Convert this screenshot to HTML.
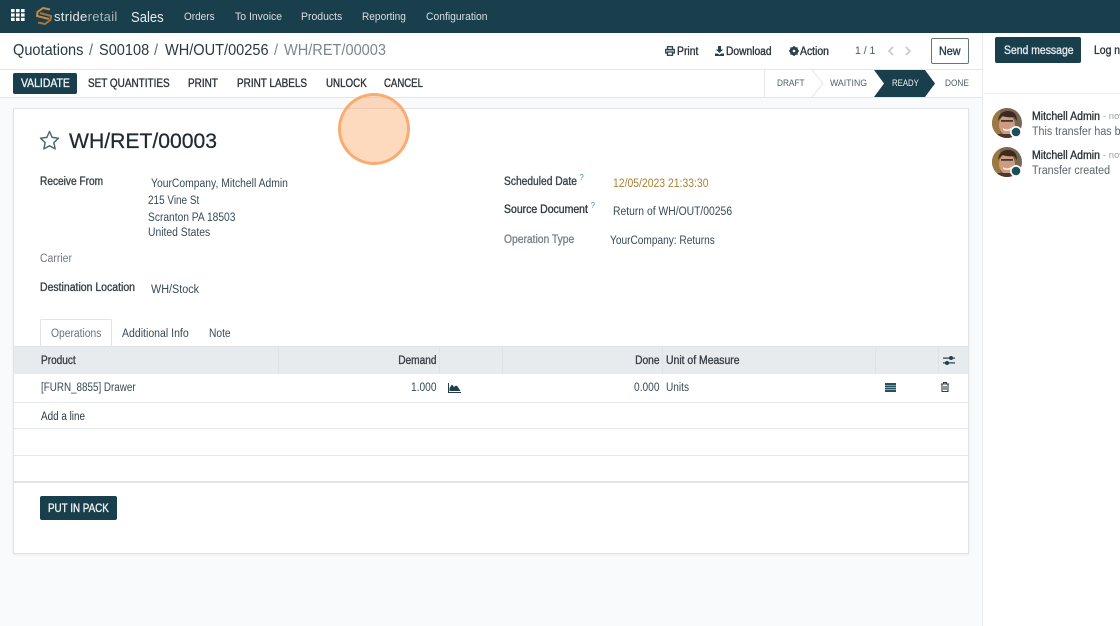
<!DOCTYPE html>
<html><head><meta charset="utf-8"><style>
html,body{margin:0;padding:0;width:1120px;height:626px;overflow:hidden;background:#fff;font-family:"Liberation Sans",sans-serif;-webkit-font-smoothing:antialiased}
.a{position:absolute}
.t{position:absolute;white-space:nowrap;font-size:12px;line-height:16px;color:#374b55;transform-origin:0 50%;transform:scaleX(calc(var(--s,1)*var(--k,1)))}
.b{color:#3a4248;font-size:11.5px;-webkit-text-stroke:.35px currentColor;--k:1.03}
.n{font-size:11.5px}
.nav{color:#d5dfe2;font-size:11px;top:9px;--s:.94}
.bc{font-size:16px;line-height:22px;top:40px;color:#2a3a42;--s:.91}
.sb{font-size:11.500px;-webkit-text-stroke:.35px currentColor;--k:1.03;color:#2c343a;top:76px}
.hd{font-size:11.500px;-webkit-text-stroke:.35px currentColor;--k:1.03;top:353px;color:#3a4248}
.st{font-size:9.5px;top:76px;color:#4f6068}
.r{text-align:right;transform-origin:100% 50%}
.hl{position:absolute;height:1px;left:14px;width:954px;background:#e5e8ea}
.vl{position:absolute;width:1px;top:347px;height:27px;background:#dfe3e6}
sup{color:#2c8fa8;font-size:8px;line-height:0;-webkit-text-stroke:0}
</style></head><body>
<div class="a" style="left:0;top:0;width:1120px;height:33px;background:#1a3f4c"></div>
<svg class="a" style="left:11px;top:9px" width="14" height="12" viewBox="0 0 14 12" fill="#fff"><rect x="0" y="0" width="3.6" height="3.2"/><rect x="5" y="0" width="3.6" height="3.2"/><rect x="10" y="0" width="3.6" height="3.2"/><rect x="0" y="4.4" width="3.6" height="3.2"/><rect x="5" y="4.4" width="3.6" height="3.2"/><rect x="10" y="4.4" width="3.6" height="3.2"/><rect x="0" y="8.8" width="3.6" height="3.2"/><rect x="5" y="8.8" width="3.6" height="3.2"/><rect x="10" y="8.8" width="3.6" height="3.2"/></svg>
<svg class="a" style="left:36px;top:7px" width="16" height="18" viewBox="0 0 16 18" fill="none"><path d="M14 2.5 7 1 1.5 5 1 9l12 3" stroke="#c98a3e" stroke-width="2"/><path d="M2 15.500 9 17l5.500-4 .5-4L4 6" stroke="#a8743a" stroke-width="2"/></svg>
<div class="t" style="left:54px;top:8px;font-size:13px;line-height:17px;color:#e4e9eb;letter-spacing:.3px">stride<span style="color:#a9b8bd">retail</span></div>
<div class="t" style="left:131px;top:8px;font-size:15px;line-height:19px;color:#e6ecee;--s:.87">Sales</div>
<div class="t nav" style="left:184px;--s:.91">Orders</div>
<div class="t nav" style="left:234.500px;--s:.95">To Invoice</div>
<div class="t nav" style="left:301px;--s:.95">Products</div>
<div class="t nav" style="left:362px;--s:.92">Reporting</div>
<div class="t nav" style="left:425.500px">Configuration</div>

<div class="a" style="left:0;top:33px;width:982px;height:36px;background:#fff;border-bottom:1px solid #e3e6e8"></div>
<div class="t bc" style="left:13px">Quotations</div>
<div class="t bc" style="left:89px;color:#5f6b72">/</div>
<div class="t bc" style="left:99px">S00108</div>
<div class="t bc" style="left:154px;color:#5f6b72">/</div>
<div class="t bc" style="left:164.500px">WH/OUT/00256</div>
<div class="t bc" style="left:274px;color:#7b868c">/</div>
<div class="t bc" style="left:284px;color:#7b868c">WH/RET/00003</div>

<svg class="a" style="left:665px;top:46px" width="10" height="10" viewBox="0 0 10 10" fill="none" stroke="#29414c" stroke-width="1.300"><rect x="2.500" y=".7" width="5" height="3"/><rect x=".7" y="3.500" width="8.600" height="3.500"/><rect x="2.500" y="6" width="5" height="3.300" fill="#fff"/></svg>
<div class="t sb" style="left:677px;top:44px;--s:.88">Print</div>
<svg class="a" style="left:715px;top:46px" width="9" height="10" viewBox="0 0 9 10" fill="#29414c"><path d="M3 0h3v3.500h2.300L4.500 7 .7 3.500H3zM0 7.500h2.500l2 1.200 2-1.200H9V10H0z"/></svg>
<div class="t sb" style="left:726px;top:44px;--s:.865">Download</div>
<svg class="a" style="left:789px;top:46px" width="10" height="10" viewBox="0 0 10 10"><circle cx="5" cy="5" r="3.300" fill="none" stroke="#29414c" stroke-width="2"/><path d="M5 0v10M0 5h10M1.500 1.500l7 7M8.500 1.500l-7 7" stroke="#29414c" stroke-width="1.500"/><circle cx="5" cy="5" r="1.300" fill="#fff"/></svg>
<div class="t sb" style="left:800px;top:44px;--s:.88">Action</div>
<div class="t" style="left:855px;top:43px;font-size:11px;color:#4a5860;--s:.95">1 / 1</div>
<svg class="a" style="left:887px;top:46px" width="30" height="10" viewBox="0 0 30 10" fill="none" stroke="#c3c9cd" stroke-width="1.600"><path d="M6 1 2 5l4 4M19 1l4 4-4 4"/></svg>
<div class="a" style="left:931px;top:38px;width:36px;height:24px;border:1px solid #5f7780;border-radius:2px;background:#fff"></div>
<div class="t sb" style="left:939px;top:44px;color:#253f4a;--s:.91">New</div>

<div class="a" style="left:0;top:70px;width:982px;height:27px;background:#fff;border-bottom:1px solid #e3e6e8"></div>
<div class="a" style="left:13px;top:73px;width:64px;height:21px;background:#1a3f4c;border-radius:2px"></div>
<div class="t sb" style="left:21px;color:#eef2f3;--s:.88">VALIDATE</div>
<div class="t sb" style="left:88px;--s:.84">SET QUANTITIES</div>
<div class="t sb" style="left:188px;--s:.84">PRINT</div>
<div class="t sb" style="left:237px;--s:.84">PRINT LABELS</div>
<div class="t sb" style="left:325.500px;--s:.825">UNLOCK</div>
<div class="t sb" style="left:384px;--s:.81">CANCEL</div>

<svg class="a" style="left:764px;top:70px" width="218" height="27" viewBox="0 0 218 27"><path d="M.5 0v27" stroke="#e5e8ea"/><path d="M48 0l11 13.500L48 27" fill="none" stroke="#e5e8ea"/><path d="M110 0h51l10 13.500L161 27h-51l10-13.500z" fill="#1a3f4c"/></svg>
<div class="t st" style="left:777px;--s:.87">DRAFT</div>
<div class="t st" style="left:830px;--s:.92">WAITING</div>
<div class="t st" style="left:892px;color:#eef2f3;--s:.82">READY</div>
<div class="t st" style="left:945px;--s:.87">DONE</div>

<div class="a" style="left:0;top:98px;width:982px;height:528px;background:#f9fafb"></div>
<div class="a" style="left:13px;top:108px;width:954px;height:444px;background:#fff;border:1px solid #e1e4e6;box-shadow:0 1px 2px rgba(0,0,0,.06)"></div>

<svg class="a" style="left:39px;top:130px" width="21" height="20" viewBox="0 0 21 20"><path d="M10.500 1.500l2.700 5.900 6.300.8-4.600 4.400 1.200 6.300-5.600-3.100-5.600 3.100 1.200-6.300L1.500 8.200l6.300-.8z" fill="none" stroke="#4d6a75" stroke-width="1.500" stroke-linejoin="round"/></svg>
<div class="t" style="left:69px;top:127px;font-size:21.500px;line-height:28px;color:#212a30;-webkit-text-stroke:.25px #212a30;--s:.983">WH/RET/00003</div>

<div class="t b" style="left:40px;top:174px;--s:.855">Receive From</div>
<div class="t n" style="left:151px;top:176px;--s:.9">YourCompany, Mitchell Admin</div>
<div class="t n" style="left:148px;top:193px;--s:.865">215 Vine St</div>
<div class="t n" style="left:148px;top:210px;--s:.89">Scranton PA 18503</div>
<div class="t n" style="left:148px;top:225px;--s:.9">United States</div>
<div class="t n" style="left:40px;top:251px;color:#6f7a80;--s:.91">Carrier</div>
<div class="t b" style="left:40px;top:280px;--s:.885">Destination Location</div>
<div class="t n" style="left:151px;top:281.500px;--s:.94">WH/Stock</div>

<div class="t b" style="left:504px;top:174px;--s:.865">Scheduled Date <sup>?</sup></div>
<div class="t n" style="left:613px;top:176px;color:#a9802f;--s:.905">12/05/2023 21:33:30</div>
<div class="t b" style="left:504px;top:202px;color:#2f3a40;--s:.885">Source Document <sup>?</sup></div>
<div class="t n" style="left:613px;top:204px;--s:.9">Return of WH/OUT/00256</div>
<div class="t b" style="left:504px;top:232px;color:#7a8489;--s:.87">Operation Type</div>
<div class="t n" style="left:610px;top:233px;--s:.88">YourCompany: Returns</div>

<div class="a" style="left:40px;top:319px;width:70px;height:28px;border:1px solid #e1e4e6;border-bottom:none;border-radius:2px 2px 0 0;background:#fff"></div>
<div class="t" style="left:50.500px;top:325.500px;font-size:11.500px;color:#6a7379;--s:.895">Operations</div>
<div class="t" style="left:121.500px;top:325.500px;font-size:11.500px;--s:.915">Additional Info</div>
<div class="t" style="left:208.500px;top:325.500px;font-size:11.500px;--s:.89">Note</div>

<div class="a" style="left:14px;top:346px;width:954px;height:28px;background:#e8ebee;border-top:1px solid #dfe3e6;box-sizing:border-box"></div>
<div class="vl" style="left:278px"></div><div class="vl" style="left:439px"></div><div class="vl" style="left:502px"></div><div class="vl" style="left:662px"></div><div class="vl" style="left:875px"></div><div class="vl" style="left:938px"></div>
<div class="t hd" style="left:41px;--s:.85">Product</div>
<div class="t hd r" style="left:340px;width:96.500px;--s:.855">Demand</div>
<div class="t hd r" style="left:560px;width:99.500px;--s:.86">Done</div>
<div class="t hd" style="left:666px;--s:.88">Unit of Measure</div>
<svg class="a" style="left:943px;top:355px" width="12" height="11" viewBox="0 0 12 11" fill="#253f4a"><rect y="2.500" width="12" height="1.200"/><rect y="7.300" width="12" height="1.200"/><circle cx="8" cy="3" r="2"/><circle cx="4" cy="8" r="2"/></svg>

<div class="t" style="left:41px;top:379.500px;font-size:11.500px;--s:.856">[FURN_8855] Drawer</div>
<div class="t r" style="left:340px;width:96.500px;top:379.500px;font-size:11.500px;--s:.885">1.000</div>
<svg class="a" style="left:448px;top:383px" width="13" height="10" viewBox="0 0 13 10" fill="#1f3e4a"><path d="M0 0h1v9h12v1H0z"/><path d="M1.500 8V5L4 1.500 6 4l2-1.500 1.500 1L12.500 8z"/></svg>
<div class="t r" style="left:560px;width:99.500px;top:379.500px;font-size:11.500px;--s:.885">0.000</div>
<div class="t" style="left:666px;top:379.500px;font-size:11.500px;--s:.88">Units</div>
<svg class="a" style="left:885px;top:383px" width="11" height="9" viewBox="0 0 11 9" fill="#29505e"><rect width="11" height="2"/><rect y="2.400" width="11" height="1.800"/><rect y="4.700" width="11" height="1.800"/><rect y="7" width="11" height="2"/></svg>
<svg class="a" style="left:941px;top:382px" width="8" height="10" viewBox="0 0 8 10" fill="none" stroke="#333d43" stroke-width="1.100"><path d="M0 2h8M2.500 2V.6h3V2M1 2.500v7h6v-7M3 4v4M5 4v4"/></svg>

<div class="hl" style="top:402px"></div>
<div class="t" style="left:41px;top:408.500px;font-size:11.500px;color:#2a3a42;--s:.86">Add a line</div>
<div class="hl" style="top:428px"></div>
<div class="hl" style="top:455px"></div>
<div class="hl" style="top:481px;height:2px;background:#e0e3e5"></div>

<div class="a" style="left:40px;top:496px;width:77px;height:24px;background:#1a3f4c;border-radius:2px"></div>
<div class="t sb" style="left:48px;top:501px;color:#eef2f3;--s:.83">PUT IN PACK</div>

<div class="a" style="left:982px;top:33px;width:1px;height:593px;background:#e8eaec"></div>
<div class="a" style="left:983px;top:33px;width:137px;height:593px;overflow:hidden">
<div class="a" style="left:12px;top:4px;width:86px;height:26px;background:#1a3f4c;border-radius:2px"></div>
<div class="t sb" style="left:21px;top:10px;color:#e4eaec;--s:.88">Send message</div>
<div class="t sb" style="left:111px;top:10px;--s:.88">Log note</div>
<div class="a" style="left:0;top:60px;width:137px;height:1px;background:#f0f1f2"></div>

<svg class="a" style="left:9px;top:75px" width="30" height="30" viewBox="0 0 30 30"><defs><clipPath id="c"><circle cx="15" cy="15" r="15"/></clipPath></defs><g clip-path="url(#c)"><rect width="30" height="30" fill="#7a6650"/><rect x="0" y="0" width="8" height="30" fill="#9a7a40"/><ellipse cx="15" cy="17" rx="8" ry="10" fill="#cf9c7e"/><path d="M6 13q1-10 10-10t9 10l-3-4q-6 1-12-1z" fill="#3d2a1f"/><rect x="9" y="12" width="12" height="1.800" fill="#3a3a3a"/><path d="M11 20q4 3 8 0v2q-4 2-8 0z" fill="#f4eeea"/><rect y="26" width="30" height="4" fill="#4e342a"/></g><circle cx="24" cy="24" r="6" fill="#fff"/><circle cx="24" cy="24" r="4.300" fill="#1a4f5c"/></svg>
<svg class="a" style="left:9px;top:114px" width="30" height="30" viewBox="0 0 30 30"><g clip-path="url(#c)"><rect width="30" height="30" fill="#7a6650"/><rect x="0" y="0" width="8" height="30" fill="#9a7a40"/><ellipse cx="15" cy="17" rx="8" ry="10" fill="#cf9c7e"/><path d="M6 13q1-10 10-10t9 10l-3-4q-6 1-12-1z" fill="#3d2a1f"/><rect x="9" y="12" width="12" height="1.800" fill="#3a3a3a"/><path d="M11 20q4 3 8 0v2q-4 2-8 0z" fill="#f4eeea"/><rect y="26" width="30" height="4" fill="#4e342a"/></g><circle cx="24" cy="24" r="6" fill="#fff"/><circle cx="24" cy="24" r="4.300" fill="#1a4f5c"/></svg>

<div class="t b" style="left:48.500px;top:76px;color:#2b3338;--s:.89">Mitchell Admin</div>
<div class="t" style="left:120px;top:76px;font-size:9.500px;color:#9aa3a8">- now</div>
<div class="t n" style="left:48.500px;top:91px;color:#5a666c;--s:.93">This transfer has been created</div>
<div class="t b" style="left:48.500px;top:115px;color:#2b3338;--s:.89">Mitchell Admin</div>
<div class="t" style="left:120px;top:115px;font-size:9.500px;color:#9aa3a8">- now</div>
<div class="t n" style="left:48.500px;top:130px;color:#5a666c;--s:.93">Transfer created</div>
</div>

<div class="a" style="left:338px;top:93px;width:66px;height:66px;border-radius:50%;background:rgba(250,170,110,.45);border:3px solid rgba(248,170,110,.95)"></div>
</body></html>
